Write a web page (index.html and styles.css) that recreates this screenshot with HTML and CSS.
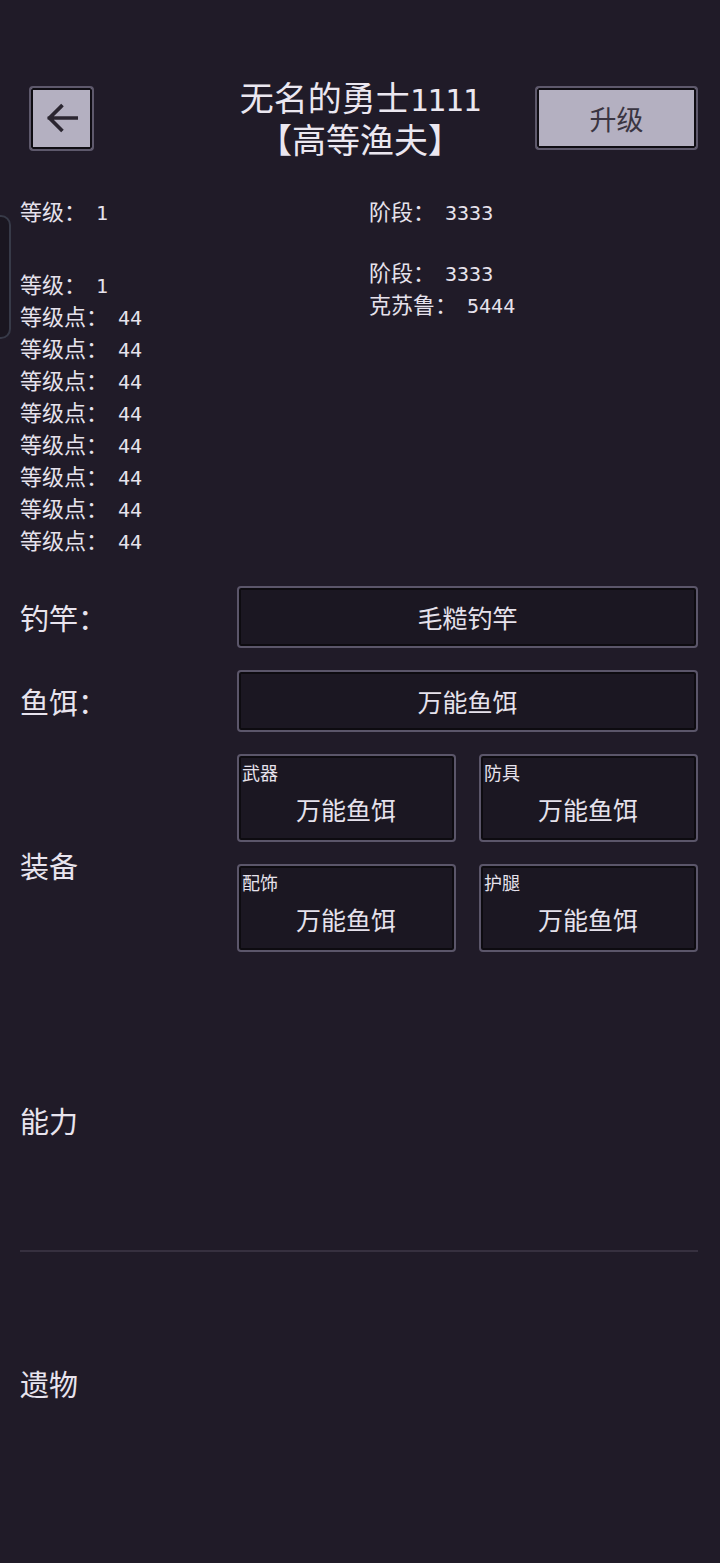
FILE: index.html
```html
<!DOCTYPE html>
<html lang="zh">
<head>
<meta charset="utf-8">
<title>角色</title>
<link rel="stylesheet" href="styles.css">
</head>
<body>
<div class="edge-tab"></div>
<header class="header">
  <button class="back" aria-label="返回">
    <svg viewBox="0 0 24 24" width="40" height="40"><path d="M20.5 12H4.5M11.5 5l-7 7 7 7" fill="none" stroke="#2b2631" stroke-width="2.2" stroke-linecap="square"/></svg>
  </button>
  <div class="title">
    <div class="title-line">无名的勇士<span class="tnum">1111</span></div>
    <div class="title-line">【高等渔夫】</div>
  </div>
  <button class="upgrade">升级</button>
</header>

<section class="stats">
  <div class="col"><div class="row">等级：<span class="num">1</span></div></div>
  <div class="col"><div class="row">阶段：<span class="num">3333</span></div></div>
</section>
<section class="stats stats-2">
  <div class="col col-left">
    <div class="row">等级：<span class="num">1</span></div>
    <div class="row">等级点：<span class="num">44</span></div>
    <div class="row">等级点：<span class="num">44</span></div>
    <div class="row">等级点：<span class="num">44</span></div>
    <div class="row">等级点：<span class="num">44</span></div>
    <div class="row">等级点：<span class="num">44</span></div>
    <div class="row">等级点：<span class="num">44</span></div>
    <div class="row">等级点：<span class="num">44</span></div>
    <div class="row">等级点：<span class="num">44</span></div>
  </div>
  <div class="col">
    <div class="row">阶段：<span class="num">3333</span></div>
    <div class="row">克苏鲁：<span class="num">5444</span></div>
  </div>
</section>

<section class="gear">
  <div class="gear-row">
    <div class="label">钓竿：</div>
    <div class="slot wide">毛糙钓竿</div>
  </div>
  <div class="gear-row">
    <div class="label">鱼饵：</div>
    <div class="slot wide">万能鱼饵</div>
  </div>
  <div class="gear-row equip">
    <div class="label equip-label">装备</div>
    <div class="equip-grid">
      <div class="slot cell"><span class="tag">武器</span><span class="name">万能鱼饵</span></div>
      <div class="slot cell"><span class="tag">防具</span><span class="name">万能鱼饵</span></div>
      <div class="slot cell"><span class="tag">配饰</span><span class="name">万能鱼饵</span></div>
      <div class="slot cell"><span class="tag">护腿</span><span class="name">万能鱼饵</span></div>
    </div>
  </div>
</section>

<section class="block ability">
  <div class="label">能力</div>
</section>
<hr class="divider">
<section class="block relic">
  <div class="label">遗物</div>
</section>
</body>
</html>
```

FILE: styles.css
```css
* { box-sizing: border-box; }

html, body {
  margin: 0;
  padding: 0;
  background: #201b28;
}

body {
  min-height: 1563px;
  color: #e6e2ec;
  font-family: "Noto Sans CJK SC", "Noto Sans", sans-serif;
  position: relative;
  overflow-x: hidden;
}

.edge-tab {
  position: absolute;
  left: -12px;
  top: 215px;
  width: 23px;
  height: 124px;
  border: 2px solid #373a48;
  border-radius: 10px;
  background: #1a1620;
}

.header {
  display: grid;
  grid-template-columns: 1fr auto 1fr;
  align-items: center;
  padding: 76px 22px 0 22px;
}

.back {
  justify-self: start;
  margin-left: 7px;
  width: 65px;
  height: 65px;
  padding: 0;
  display: flex;
  align-items: center;
  justify-content: center;
  background: #b4b0c1;
  border: 2px solid #5e596c;
  border-radius: 4px;
  box-shadow: inset 0 0 0 2px #0f0d13;
  cursor: pointer;
}

.title {
  text-align: center;
  font-size: 34px;
  color: #ebe7f0;
}

.title-line {
  height: 42px;
  line-height: 42px;
}

.tnum {
  font-family: "DejaVu Sans Mono", "Liberation Mono", monospace;
  font-size: 31px;
  line-height: 1;
  letter-spacing: -1px;
}

.upgrade {
  justify-self: end;
  width: 163px;
  height: 64px;
  padding: 0;
  background: #b4b0c1;
  border: 2px solid #5e596c;
  border-radius: 4px;
  box-shadow: inset 0 0 0 2px #0f0d13;
  font-family: "Noto Sans CJK SC", "Noto Sans", sans-serif;
  font-size: 27px;
  color: #3a3541;
  cursor: pointer;
}

.stats {
  display: grid;
  grid-template-columns: 349px 1fr;
  padding: 0 20px;
  margin-top: 34px;
  font-size: 22px;
  line-height: 32px;
}

.row {
  height: 32px;
  line-height: 32px;
  white-space: nowrap;
}

.num {
  font-family: "DejaVu Sans Mono", "Liberation Mono", monospace;
  font-size: 20px;
  line-height: 1;
  margin-left: 10px;
}

.stats-2 {
  margin-top: 29px;
}

.col-left {
  padding-top: 12px;
}

.gear {
  padding: 0 22px 0 20px;
  margin-top: 31px;
  display: flex;
  flex-direction: column;
  gap: 22px;
}

.gear-row {
  display: grid;
  grid-template-columns: 217px 1fr;
  align-items: center;
}

.label {
  font-size: 29px;
  line-height: 40px;
  color: #e8e4ee;
}

.slot {
  background: #1b1722;
  border: 2px solid #5b566a;
  border-radius: 4px;
  box-shadow: inset 0 0 0 2px #0d0b10;
  color: #e6e2ec;
}

.wide {
  height: 62px;
  display: flex;
  align-items: center;
  justify-content: center;
  font-size: 25px;
}

.equip {
  align-items: start;
}

.equip-label {
  padding-top: 91px;
}

.equip-grid {
  display: grid;
  grid-template-columns: 1fr 1fr;
  column-gap: 23px;
  row-gap: 22px;
}

.cell {
  height: 88px;
  display: flex;
  flex-direction: column;
  padding: 5px 4px 4px 3px;
}

.tag {
  font-size: 18px;
  line-height: 22px;
  align-self: flex-start;
}

.name {
  flex: 1;
  display: flex;
  align-items: center;
  justify-content: center;
  font-size: 25px;
  padding-bottom: 2px;
}

.block {
  padding: 0 20px;
}

.ability {
  margin-top: 148px;
}

.divider {
  margin: 110px 22px 0 20px;
  border: 0;
  height: 2px;
  background: #36303f;
}

.relic {
  margin-top: 111px;
}
```
